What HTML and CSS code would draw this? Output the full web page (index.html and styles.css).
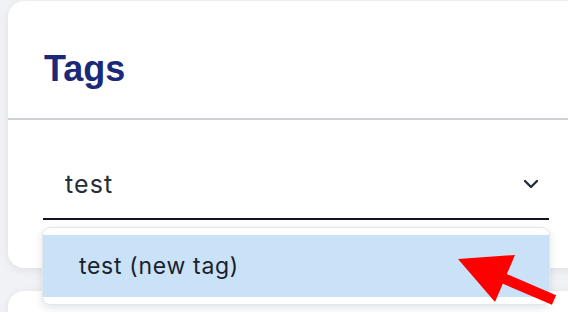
FILE: index.html
```html
<!DOCTYPE html>
<html lang="en">
<head>
<meta charset="utf-8">
<title>Tags</title>
<link rel="stylesheet" href="styles.css">
</head>
<body>
<div class="page">
  <section class="card">
    <header class="card-header">
      <h2 class="card-title">Tags</h2>
    </header>
    <div class="card-body">
      <div class="select">
        <div class="field">
          <span class="field-value">test</span>
          <svg class="chevron" width="16" height="10" viewBox="0 0 16 10"><polyline points="2,2 8,8 14,2" fill="none" stroke="#262d3b" stroke-width="2.4" stroke-linecap="round" stroke-linejoin="round"/></svg>
        </div>
        <ul class="menu">
          <li class="menu-item">test (new tag)</li>
        </ul>
      </div>
    </div>
  </section>
  <section class="card card-next"></section>
  <svg class="annotation" width="568" height="312" viewBox="0 0 568 312">
    <line x1="498" y1="276" x2="554" y2="300" stroke="#ff0000" stroke-width="10.5"/>
    <polygon points="458,259 515,255 495,302" fill="#ff0000"/>
  </svg>
</div>
</body>
</html>
```
FILE: styles.css
```css
html, body {
  margin: 0;
  padding: 0;
}
body {
  background: #f1f2f5;
  font-family: Inter, "Liberation Sans", sans-serif;
  overflow: hidden;
}
.page {
  position: relative;
  width: 568px;
  height: 312px;
  overflow: hidden;
  padding-top: 1px;
  box-sizing: border-box;
}
.card {
  margin-left: 8px;
  width: 640px;
  height: 267px;
  background: #ffffff;
  border-radius: 16px;
  box-shadow: 0 2px 10px rgba(20, 30, 60, 0.08);
}
.card-next {
  margin-top: 23px;
  height: 80px;
}
.card-header {
  height: 119px;
  padding: 46px 36px 0;
  box-sizing: border-box;
  border-bottom: 2px solid #cdd1d6;
}
.card-title {
  margin: 0;
  font-family: "Liberation Sans", Arial, sans-serif;
  font-weight: 700;
  font-size: 36px;
  line-height: 44px;
  letter-spacing: 0;
  color: #1a2a78;
}
.card-body {
  padding: 30px 0 0 35px;
}
.select {
  position: relative;
  width: 506px;
}
.field {
  display: flex;
  align-items: center;
  justify-content: space-between;
  height: 68px;
  padding: 0 10px 0 22px;
  border-bottom: 2px solid #111522;
}
.field-value {
  font-size: 25px;
  letter-spacing: 1.1px;
  color: #262d3b;
}
.chevron {
  display: block;
}
.menu {
  position: absolute;
  top: calc(100% + 7px);
  left: -1px;
  right: -1px;
  margin: 0;
  padding: 7px 0;
  list-style: none;
  background: #ffffff;
  border: 1px solid #e4e6ea;
  border-radius: 8px;
  box-shadow: 0 3px 8px rgba(20, 30, 60, 0.12);
  z-index: 2;
}
.menu-item {
  height: 62px;
  display: flex;
  align-items: center;
  padding-left: 36px;
  background: #c9e2f8;
  font-size: 23px;
  letter-spacing: 0.7px;
  color: #1a1f2b;
}
.annotation {
  position: absolute;
  left: 0;
  top: 0;
  z-index: 5;
  pointer-events: none;
}
```
